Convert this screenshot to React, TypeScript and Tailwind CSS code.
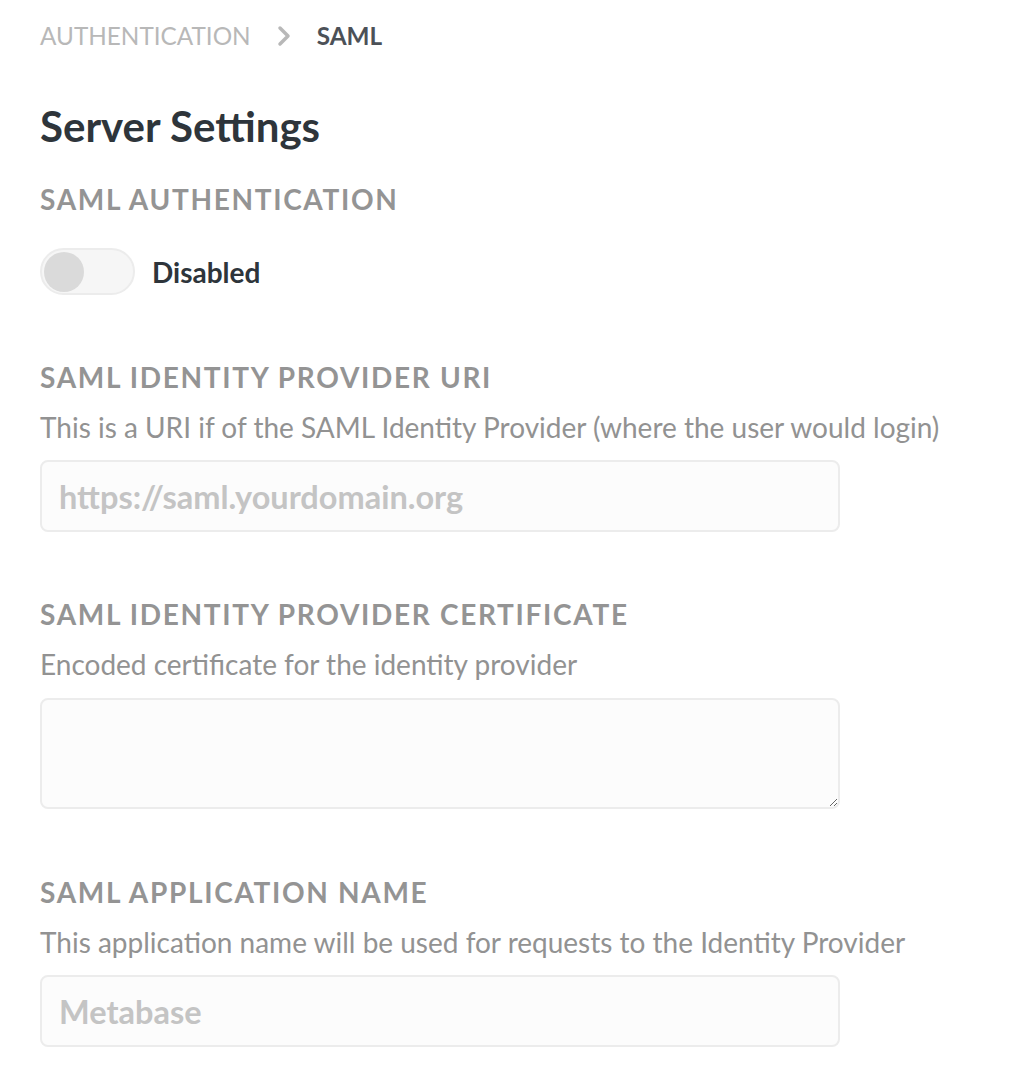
import React from "react";

function Label({ children }: { children: React.ReactNode }) {
  return (
    <div className="text-[28px] leading-[34px] font-bold tracking-[0.06em] text-[#949494] uppercase">
      {children}
    </div>
  );
}

function Desc({ children }: { children: React.ReactNode }) {
  return <div className="text-[28px] leading-[34px] text-[#929292] mt-[16px]">{children}</div>;
}

export default function App() {
  return (
    <div
      className="bg-white min-h-[1076px] w-[1030px] px-[40px] pt-[19px]"
      style={{ fontFamily: "Lato, 'Open Sans', sans-serif" }}
    >
      <div className="flex items-center text-[24.3px] leading-[34px]">
        <span className="text-[#b8b8b8]">AUTHENTICATION</span>
        <svg className="mx-[26px]" width="14" height="22" viewBox="0 0 14 22" fill="none">
          <path d="M3 3l8 8-8 8" stroke="#b8b8b8" strokeWidth="3.5" strokeLinecap="round" strokeLinejoin="round" />
        </svg>
        <span className="text-[#4c5157] font-bold">SAML</span>
      </div>

      <h1 className="text-[42px] leading-[50px] font-bold text-[#2e353b] mt-[48px]">Server Settings</h1>

      <div className="mt-[31px]">
        <Label>SAML Authentication</Label>
        <div className="flex items-center mt-[32px] h-[47px]">
          <div className="w-[95px] h-[47px] rounded-full bg-[#f6f6f6] border-2 border-[#ececec] flex items-center px-[2px]">
            <div className="w-[40px] h-[40px] rounded-full bg-[#dadada]" />
          </div>
          <span className="ml-[17px] text-[28px] leading-[34px] font-bold text-[#2e353b]">Disabled</span>
        </div>
      </div>

      <div className="mt-[65px]">
        <Label>SAML Identity Provider URI</Label>
        <Desc>This is a URI if of the SAML Identity Provider (where the user would login)</Desc>
        <input
          className="mt-[16px] block w-[800px] h-[72px] rounded-[8px] border-2 border-[#ececec] bg-[#fcfcfc] px-[17px] text-[32.5px] font-bold text-[#2e353b] placeholder:text-[#c4c4c4] outline-none"
          placeholder="https://saml.yourdomain.org"
        />
      </div>

      <div className="mt-[65px]">
        <Label>SAML Identity Provider Certificate</Label>
        <Desc>Encoded certificate for the identity provider</Desc>
        <textarea className="mt-[17px] block w-[800px] h-[111px] rounded-[8px] border-2 border-[#ececec] bg-[#fcfcfc] px-[17px] py-[10px] text-[28px] outline-none" />
      </div>

      <div className="mt-[66px]">
        <Label>SAML Application Name</Label>
        <Desc>This application name will be used for requests to the Identity Provider</Desc>
        <input
          className="mt-[16px] block w-[800px] h-[72px] rounded-[8px] border-2 border-[#ececec] bg-[#fcfcfc] px-[17px] text-[32.5px] font-bold text-[#2e353b] placeholder:text-[#c4c4c4] outline-none"
          placeholder="Metabase"
        />
      </div>
    </div>
  );
}
